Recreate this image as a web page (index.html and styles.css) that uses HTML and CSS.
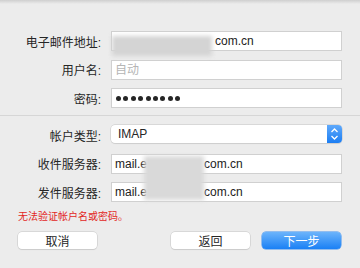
FILE: index.html
```html
<!DOCTYPE html>
<html lang="zh-CN">
<head>
  <meta charset="UTF-8" />
  <title>添加帐户</title>
  <link rel="stylesheet" href="styles.css">
</head>
<body>
  <div class="shade"></div>

  <div class="form">
    <div class="section first">
      <label>电子邮件地址:</label>
      <div class="field"><span class="hide" style="width:100px"></span>com.cn</div>

      <label>用户名:</label>
      <div class="field placeholder">自动</div>

      <label>密码:</label>
      <div class="field dots">
        <i></i><i></i><i></i><i></i><i></i><i></i><i></i><i></i><i></i>
      </div>
      <div class="blur blur-email"></div>
    </div>

    <div class="section second">
      <label>帐户类型:</label>
      <div class="popup">
        <span>IMAP</span>
        <span class="stepper">
          <svg width="15" height="18" viewBox="0 0 15 18">
            <path d="M4.5 7 L7.5 4 L10.5 7" fill="none" stroke="#fff" stroke-width="1.3"/>
            <path d="M4.5 11 L7.5 14 L10.5 11" fill="none" stroke="#fff" stroke-width="1.3"/>
          </svg>
        </span>
      </div>

      <label>收件服务器:</label>
      <div class="field">mail.e<span class="hide" style="width:57px"></span>com.cn</div>

      <label>发件服务器:</label>
      <div class="field">mail.e<span class="hide" style="width:57px"></span>com.cn</div>
      <div class="blur blur-server"></div>
    </div>

    <p class="error">无法验证帐户名或密码。</p>

    <div class="buttons">
      <button>取消</button>
      <div class="spacer"></div>
      <button>返回</button>
      <button class="primary">下一步</button>
    </div>
  </div>
</body>
</html>
```

FILE: styles.css
```css
* {
  margin: 0; padding: 0;
  box-sizing: border-box;
  font-family: 'Liberation Sans', 'Noto Sans CJK SC', sans-serif;
}
body {
  background-color: #ececec;
  width: 360px;
  height: 268px;
  overflow: hidden;
  color: #262626;
}
.shade {
  height: 4px;
  background: linear-gradient(#cfcfcf, #ececec);
}

.section {
  position: relative;
  display: grid;
  grid-template-columns: 101px 231px;
  column-gap: 10px;
  row-gap: 8.5px;
  grid-auto-rows: 20px;
}
.section.first {
  padding-top: 27px;
  padding-bottom: 7px;
  border-bottom: 1px solid #d6d6d6;
}
.section.second {
  padding-top: 9px;
}
.section label {
  font-size: 12px;
  text-align: right;
  align-self: center;
  white-space: nowrap;
}

.field {
  background: #fff;
  border: 1px solid #d0d0d0;
  font-size: 12px;
  line-height: 18px;
  padding-left: 3px;
  color: #222;
  white-space: nowrap;
  display: flex;
  align-items: center;
}
.field .hide {
  display: inline-block;
  height: 1px;
}
.field.placeholder {
  color: #b5b5b5;
}
.dots {
  gap: 2.4px;
  padding-left: 4px;
}
.dots i {
  width: 5px;
  height: 5px;
  border-radius: 50%;
  background: #262626;
}

.popup {
  height: 18px;
  background: #fff;
  border-radius: 4px;
  box-shadow: 0 0 0 0.5px #c4c4c4, 0 1px 1px rgba(0,0,0,0.08);
  display: flex;
  align-items: center;
  justify-content: space-between;
  font-size: 12px;
  padding-left: 7px;
  overflow: hidden;
}
.stepper {
  width: 15px;
  height: 18px;
  background: linear-gradient(#5fa9fb, #1c7ef3);
  display: flex;
}

.blur {
  position: absolute;
  background: #d4d4d4;
  filter: blur(2px);
}
.blur-email {
  left: 112px;
  top: 32px;
  width: 100px;
  height: 20px;
}
.blur-server {
  left: 144px;
  top: 40px;
  width: 60px;
  height: 44px;
  background: #d9d9d9;
}

.error {
  font-size: 10px;
  line-height: 12px;
  color: #e2281f;
  padding-left: 18px;
  margin-top: 9px;
}

.buttons {
  display: flex;
  gap: 12px;
  padding: 0 19px 0 18px;
  margin-top: 9px;
}
.spacer {
  flex: 1;
}
.buttons button {
  width: 79px;
  height: 17px;
  background: #fff;
  border: none;
  border-radius: 4px;
  box-shadow: 0 0 0 0.5px #c4c4c4, 0 1px 1px rgba(0,0,0,0.1);
  font-size: 12px;
  color: #262626;
}
.buttons button.primary {
  background: linear-gradient(#6cb4fb, #1a80f5);
  color: #fff;
  box-shadow: 0 0 0 0.5px #3b8ef0;
}
```
